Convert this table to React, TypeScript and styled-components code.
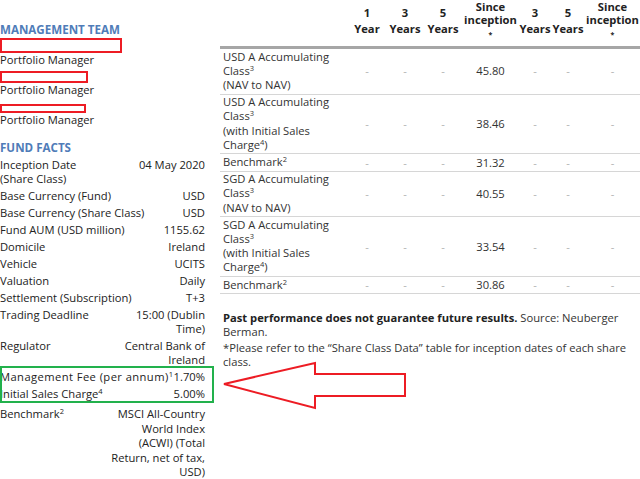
import React from "react";
import styled, { createGlobalStyle } from "styled-components";

const GlobalStyle = createGlobalStyle`
  html, body {
    margin: 0;
    padding: 0;
    background: #ffffff;
  }

  body {
    font-family: "Open Sans", "Noto Sans", sans-serif;
    font-size: 11.2px;
    color: #222222;
  }
`;

const Page = styled.div`
  display: grid;
  grid-template-columns: 205px 420px;
  column-gap: 15px;
  width: 640px;
  height: 479px;
  overflow: hidden;
`;

const LeftColumn = styled.div`
  display: flex;
  flex-direction: column;
`;

const SectionTitle = styled.div<{ $top: number }>`
  margin-top: ${(p) => p.$top}px;
  font-size: 11.6px;
  font-weight: 700;
  line-height: 16px;
  color: #4f7cb8;
  text-transform: uppercase;
`;

const NameBox = styled.div<{ $w: number; $h: number; $top: number }>`
  width: ${(p) => p.$w}px;
  height: ${(p) => p.$h}px;
  margin-top: ${(p) => p.$top}px;
  border: 2px solid #ed1c24;
  box-sizing: border-box;
  background: #ffffff;
`;

const Role = styled.div`
  line-height: 14px;
`;

const FactRow = styled.div<{ $loose?: boolean }>`
  display: flex;
  justify-content: space-between;
  align-items: flex-start;
  padding: ${(p) => (p.$loose ? "5px 0 1.5px" : "1.5px 0")};
  line-height: ${(p) => (p.$loose ? "14.6px" : "14px")};
`;

const FactLabel = styled.span<{ $spread?: boolean }>`
  white-space: nowrap;
  letter-spacing: ${(p) => (p.$spread ? "0.42px" : "normal")};
`;

const FactValue = styled.span`
  text-align: right;
  white-space: nowrap;
`;

const Highlight = styled.div`
  position: relative;

  &::after {
    content: "";
    position: absolute;
    top: -2px;
    bottom: -1px;
    left: 0;
    right: -9px;
    border: 2px solid #22b14c;
    pointer-events: none;
  }
`;

const Sup = styled.sup`
  font-size: 7.5px;
  line-height: 0;
  letter-spacing: normal;
  vertical-align: 4px;
`;

const RightColumn = styled.div`
  display: flex;
  flex-direction: column;
`;

const PerfTable = styled.table`
  width: 420px;
  table-layout: fixed;
  border-collapse: collapse;
  font-size: 11.2px;
`;

const HeadCell = styled.th<{ $tall?: boolean }>`
  padding: ${(p) => (p.$tall ? "0 0 6px" : "5px 0 8px")};
  vertical-align: top;
  text-align: center;
  font-weight: 700;
  line-height: ${(p) => (p.$tall ? "13px" : "16px")};
  color: #222222;
  border-bottom: 3px solid #a6a6a6;
  white-space: nowrap;
`;

const Star = styled.span`
  font-size: 7px;
  line-height: 10px;
`;

const Row = styled.tr`
  border-bottom: 1px solid #d6d6d6;
`;

const LabelCell = styled.td`
  padding: 0.5px 0 1.5px 3px;
  line-height: 14.2px;
  vertical-align: top;
  color: #333333;
  white-space: nowrap;
`;

const NumCell = styled.td<{ $dash?: boolean }>`
  padding: 0;
  text-align: center;
  vertical-align: middle;
  line-height: 14px;
  color: ${(p) => (p.$dash ? "#b3b3b3" : "#333333")};
`;

const Notes = styled.div`
  margin-top: 17px;
  padding-left: 3px;
  display: flex;
  flex-direction: column;
  gap: 2px;
  line-height: 14px;
  color: #333333;
`;

const Note = styled.p`
  margin: 0;
  white-space: nowrap;
`;

const Strong = styled.strong`
  font-weight: 700;
  color: #222222;
`;

const Arrow = styled.svg`
  display: block;
  margin-top: -8px;
`;

type Fact = { label: React.ReactNode; value: React.ReactNode };

const facts: Fact[] = [
  { label: <>Inception Date<br />(Share Class)</>, value: "04 May 2020" },
  { label: "Base Currency (Fund)", value: "USD" },
  { label: "Base Currency (Share Class)", value: "USD" },
  { label: "Fund AUM (USD million)", value: "1155.62" },
  { label: "Domicile", value: "Ireland" },
  { label: "Vehicle", value: "UCITS" },
  { label: "Valuation", value: "Daily" },
  { label: "Settlement (Subscription)", value: "T+3" },
  { label: "Trading Deadline", value: <>15:00 (Dublin<br />Time)</> },
  { label: "Regulator", value: <>Central Bank of<br />Ireland</> },
];

const members = [
  { w: 122, h: 15, top: 0 },
  { w: 88, h: 12, top: 4 },
  { w: 86, h: 9, top: 7 },
];

type PerfRow = { label: React.ReactNode; since: string };

const perfRows: PerfRow[] = [
  { label: <>USD A Accumulating<br />Class<Sup>3</Sup><br />(NAV to NAV)</>, since: "45.80" },
  { label: <>USD A Accumulating<br />Class<Sup>3</Sup><br />(with Initial Sales<br />Charge<Sup>4</Sup>)</>, since: "38.46" },
  { label: <>Benchmark<Sup>2</Sup></>, since: "31.32" },
  { label: <>SGD A Accumulating<br />Class<Sup>3</Sup><br />(NAV to NAV)</>, since: "40.55" },
  { label: <>SGD A Accumulating<br />Class<Sup>3</Sup><br />(with Initial Sales<br />Charge<Sup>4</Sup>)</>, since: "33.54" },
  { label: <>Benchmark<Sup>2</Sup></>, since: "30.86" },
];

const colWidths = [128, 38, 38, 38, 57, 32, 34, 55];

function FactLine({ fact }: { fact: Fact }) {
  return (
    <FactRow>
      <FactLabel>{fact.label}</FactLabel>
      <FactValue>{fact.value}</FactValue>
    </FactRow>
  );
}

export default function App() {
  return (
    <>
      <GlobalStyle />
      <Page>
        <LeftColumn>
          <SectionTitle $top={22}>Management Team</SectionTitle>
          {members.map((m, i) => (
            <React.Fragment key={i}>
              <NameBox $w={m.w} $h={m.h} $top={m.top} />
              <Role>Portfolio Manager</Role>
            </React.Fragment>
          ))}
          <SectionTitle $top={13}>Fund Facts</SectionTitle>
          {facts.map((f, i) => (
            <FactLine key={i} fact={f} />
          ))}
          <Highlight>
            <FactRow>
              <FactLabel $spread>
                Management Fee (per annum)<Sup>1</Sup>
              </FactLabel>
              <FactValue>1.70%</FactValue>
            </FactRow>
            <FactRow>
              <FactLabel>
                Initial Sales Charge<Sup>4</Sup>
              </FactLabel>
              <FactValue>5.00%</FactValue>
            </FactRow>
          </Highlight>
          <FactRow $loose>
            <FactLabel>
              Benchmark<Sup>2</Sup>
            </FactLabel>
            <FactValue>
              MSCI All-Country<br />World Index<br />(ACWI) (Total<br />
              Return, net of tax,<br />USD)
            </FactValue>
          </FactRow>
        </LeftColumn>

        <RightColumn>
          <PerfTable>
            <colgroup>
              {colWidths.map((w, i) => (
                <col key={i} style={{ width: w }} />
              ))}
            </colgroup>
            <thead>
              <tr>
                <HeadCell />
                <HeadCell>1<br />Year</HeadCell>
                <HeadCell>3<br />Years</HeadCell>
                <HeadCell>5<br />Years</HeadCell>
                <HeadCell $tall>Since<br />inception<br /><Star>*</Star></HeadCell>
                <HeadCell>3<br />Years</HeadCell>
                <HeadCell>5<br />Years</HeadCell>
                <HeadCell $tall>Since<br />inception<br /><Star>*</Star></HeadCell>
              </tr>
            </thead>
            <tbody>
              {perfRows.map((r, i) => (
                <Row key={i}>
                  <LabelCell>{r.label}</LabelCell>
                  <NumCell $dash>-</NumCell>
                  <NumCell $dash>-</NumCell>
                  <NumCell $dash>-</NumCell>
                  <NumCell>{r.since}</NumCell>
                  <NumCell $dash>-</NumCell>
                  <NumCell $dash>-</NumCell>
                  <NumCell $dash>-</NumCell>
                </Row>
              ))}
            </tbody>
          </PerfTable>

          <Notes>
            <Note>
              <Strong>Past performance does not guarantee future results.</Strong> Source: Neuberger
              <br />
              Berman.
            </Note>
            <Note>
              *Please refer to the “Share Class Data” table for inception dates of each share
              <br />
              class.
            </Note>
          </Notes>

          <Arrow width="190" height="50" viewBox="0 0 190 50">
            <polygon
              points="4,23 95,2 95,13 185,13 185,35 95,35 95,47"
              fill="none"
              stroke="#ed1c24"
              strokeWidth="2"
            />
          </Arrow>
        </RightColumn>
      </Page>
    </>
  );
}
